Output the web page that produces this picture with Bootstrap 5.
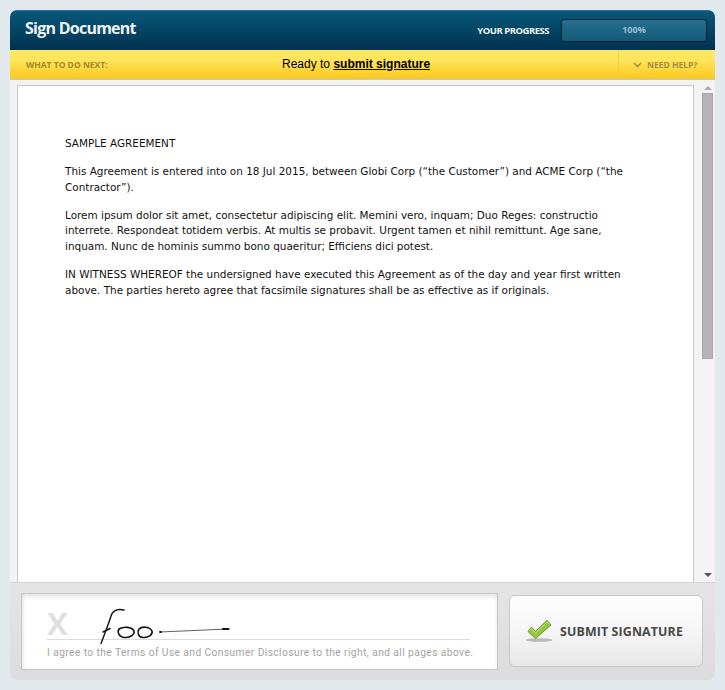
<!DOCTYPE html>
<html lang="en"><head><meta charset="utf-8"><title>Sign Document</title>
<link href="https://cdn.jsdelivr.net/npm/bootstrap@5.3.0/dist/css/bootstrap.min.css" rel="stylesheet">
<style>
html,body{height:690px;overflow:hidden}
body{background:#e1e9ec;padding:10px}
.shell{width:705px;height:670px;border-radius:7px;overflow:hidden;background:linear-gradient(#f3f3f3 0,#f3f3f3 60%,#dcdcdc 100%)}
.topbar{height:40px;background:linear-gradient(#07587a,#02314f);border-top:1px solid #2a7491;padding:0 8px 0 15px}
.apptitle{font:700 16px "Open Sans",sans-serif;color:#eef3f5;margin:0;position:relative;top:-3px;letter-spacing:-.75px}
.proglabel{font:700 9.5px "Open Sans",sans-serif;color:#eef3f5;margin-right:12px;letter-spacing:-.5px}
.progbox{width:146px;height:23px;border:1px solid #04202f;border-radius:3px;background:linear-gradient(#24708f,#155a79);font:700 9px/19px "Open Sans",sans-serif;color:#9fc0cf;text-align:center}
.nextbar{height:29px;background:linear-gradient(#ffe964 0,#ffe45b 35%,#fdc81d 100%)}
.nextlabel{width:193px;padding-left:16px;font:700 8.500px "Open Sans",sans-serif;color:#a08a2a}
.nextmsg{width:415px;font:12px "Liberation Sans",sans-serif;color:#000;padding-left:79px;position:relative;top:-1px}
.nextmsg a{color:#000;font-weight:700}
.helpcell{width:97px;height:100%;border-left:1px solid #f3cf3a;font:700 8.500px "Open Sans",sans-serif;color:#9c8f4a;padding-left:14px;gap:5px}
.docarea{height:504px;background:#f3f3f3;border-top:1px solid #c4c8ca;border-bottom:1px solid #d5d5d5;padding:5px 0 0 7px}
.sheet{width:677px;height:100%;background:#fff;border:1px solid #c8c8c8;border-bottom:0;padding:50px 58px 0 47px;font:10.45px/15.5px "DejaVu Sans",sans-serif;color:#111}
.sheet p{margin:0 0 12.7px}
.scrolltrack{width:13px;margin-left:7px;padding-top:8px;margin-top:-5px}
.scrollthumb{width:11px;height:266px;background:#b4b4b4;border:1px solid #a8a8a8;margin:0 auto}
.arrowup,.arrowdown{width:0;height:0;border-left:4px solid transparent;border-right:4px solid transparent}
.arrowup{border-bottom:4px solid #aaa;margin:-2px auto 3px}
.arrowdown{border-top:4px solid #555;margin:0 auto 5px}
.signrow{height:97px;padding:10px 11px 0 11px}
.sigbox{width:477px;height:77px;background:#fff;border:1px solid #c6c6c6;box-shadow:inset 0 3px 5px rgba(0,0,0,.1),inset 2px 0 3px rgba(0,0,0,.04);padding:0 25px}
.sigline{height:46px;border-bottom:1px solid #dcdcdc;width:423px}
.xmark{font:700 31px/1 "Open Sans",sans-serif;color:#dfdfdf}
.sigsvg{left:70px;top:10px;width:150px;height:45px}
.sigcaption{font:10.2px/1 "Roboto",sans-serif;letter-spacing:.43px;color:#a2a2a2;margin:8px 0 0 0;white-space:nowrap}
.submitbtn{width:194px;height:72px;margin:2px 0 0 11px;border:1px solid #c8c8c8;border-radius:6px;background:linear-gradient(#fdfdfd,#f6f6f6 50%,#e7e7e7);font:700 12.4px "Open Sans",sans-serif;color:#484848;padding:0 0 0 15px;gap:7px;letter-spacing:.13px}
</style></head>
<body>
<div class="shell d-flex flex-column">
  <div class="topbar d-flex align-items-center">
    <h1 class="apptitle">Sign Document</h1>
    <div class="ms-auto d-flex align-items-center">
      <span class="proglabel">YOUR PROGRESS</span>
      <div class="progbox">100%</div>
    </div>
  </div>
  <div class="nextbar d-flex align-items-center">
    <div class="nextlabel">WHAT TO DO NEXT:</div>
    <div class="nextmsg">Ready to <a href="#">submit signature</a></div>
    <div class="helpcell d-flex align-items-center">
      <svg width="9" height="6" viewBox="0 0 9 6"><path d="M1 1l3.5 3.5L8 1" fill="none" stroke="#9c8f4a" stroke-width="1.6"/></svg>
      <span>NEED HELP?</span>
    </div>
  </div>
  <div class="docarea d-flex">
    <div class="sheet">
      <p>SAMPLE AGREEMENT</p>
      <p>This Agreement is entered into on 18 Jul 2015, between Globi Corp (“the Customer”) and ACME Corp (“the Contractor”).</p>
      <p>Lorem ipsum dolor sit amet, consectetur adipiscing elit. Memini vero, inquam; Duo Reges: constructio interrete. Respondeat totidem verbis. At multis se probavit. Urgent tamen et nihil remittunt. Age sane, inquam. Nunc de hominis summo bono quaeritur; Efficiens dici potest.</p>
      <p>IN WITNESS WHEREOF the undersigned have executed this Agreement as of the day and year first written above. The parties hereto agree that facsimile signatures shall be as effective as if originals.</p>
    </div>
    <div class="scrolltrack d-flex flex-column">
      <div class="arrowup"></div>
      <div class="scrollthumb"></div>
      <div class="arrowdown mt-auto"></div>
    </div>
  </div>
  <div class="signrow d-flex align-items-start">
    <div class="sigbox position-relative">
      <div class="sigline d-flex align-items-end">
        <span class="xmark">X</span>
      </div>
      <div class="sigcaption">I agree to the Terms of Use and Consumer Disclosure to the right, and all pages above.</div>
      <svg class="sigsvg position-absolute" viewBox="0 0 150 45" fill="none" stroke="#111" stroke-linecap="round" stroke-linejoin="round">
        <path d="M32 6C25 4.500 21 6 19 12C16 22 12 31 9 39.500" stroke-width="1.4"/>
        <path d="M11 28L18 24.500" stroke-width="1.4"/>
        <path d="M27 25C31 22.500 40 22.500 42 27C43 31 37 34 32 33.500C27 33 25 28 27 25Z" stroke-width="1.6"/>
        <path d="M47 25C50 22 58 22.500 60 27C61 31 56 34 51 33.500C46 33 45 28 47 25Z" stroke-width="1.6"/>
        <path d="M68 28L136 25" stroke-width=".8" stroke="#333"/>
        <path d="M68 28h1" stroke-width="1.8"/>
        <path d="M131 25h5.500" stroke-width="2.200"/>
      </svg>
    </div>
    <button class="submitbtn d-flex align-items-center" type="button">
      <svg width="28" height="24" viewBox="0 0 28 24">
        <ellipse cx="14" cy="21" rx="13.500" ry="1.800" fill="#999" opacity=".65"/>
        <path d="M3 12.500L6.500 8L10.500 12.500L22 1.300L26 6L10.500 19.500Z" fill="#93c83e" stroke="#5e9a28" stroke-width="1"/>
        <path d="M5 11.500L6.500 9.500L10.500 14L22 3L24 5" fill="none" stroke="#c8e77c" stroke-width="1"/>
      </svg>
      <span>SUBMIT SIGNATURE</span>
    </button>
  </div>
</div>
<script src="https://cdn.jsdelivr.net/npm/bootstrap@5.3.0/dist/js/bootstrap.bundle.min.js"></script>
</body></html>
